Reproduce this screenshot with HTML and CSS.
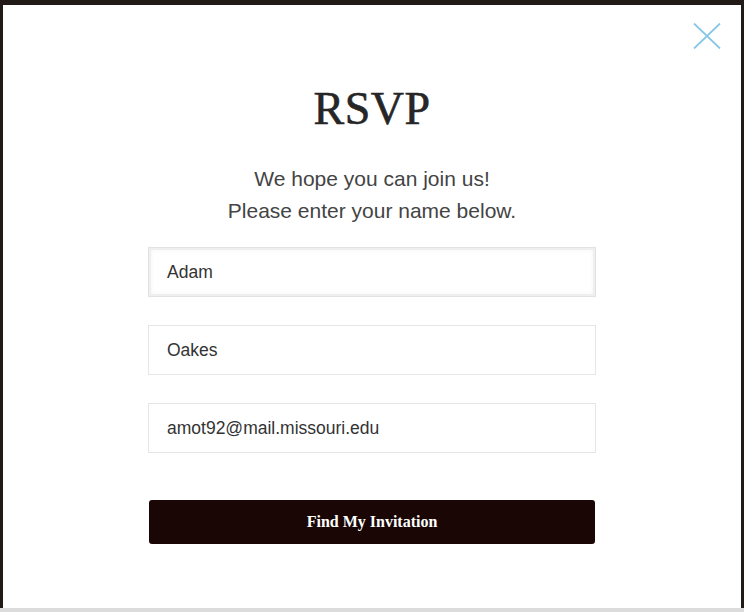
FILE: index.html
```html
<!DOCTYPE html>
<html lang="en">
<head>
<meta charset="utf-8">
<title>RSVP</title>
<link rel="stylesheet" href="styles.css">
</head>
<body>
<div class="stage">
  <div class="modal">
    <button class="close" aria-label="Close">
      <svg width="28" height="26" viewBox="0 0 28 26"><path d="M1 0.5 L27 25.5 M27 0.5 L1 25.5" stroke="#86c7e6" stroke-width="1.8" fill="none"/></svg>
    </button>
    <h1 class="title">RSVP</h1>
    <p class="intro">We hope you can join us!<br>Please enter your name below.</p>
    <form class="form">
      <div class="field field-focus">Adam</div>
      <div class="field">Oakes</div>
      <div class="field">amot92@mail.missouri.edu</div>
      <div class="btn">Find My Invitation</div>
    </form>
  </div>
  <div class="strip"></div>
</div>
</body>
</html>
```

FILE: styles.css
```css
html, body {
  margin: 0;
  padding: 0;
}
body {
  width: 744px;
  height: 612px;
  overflow: hidden;
  background: #221a17;
}
.stage {
  display: flex;
  flex-direction: column;
  height: 612px;
}
.modal {
  position: relative;
  margin: 5px 3px 0 3px;
  height: 603px;
  background: #ffffff;
  display: flex;
  flex-direction: column;
  align-items: center;
  box-sizing: border-box;
  padding-top: 81px;
}
.strip {
  flex: 1;
  background: #dcdcdc;
}
.close {
  position: absolute;
  top: 18px;
  right: 20px;
  width: 28px;
  height: 26px;
  padding: 0;
  border: 0;
  background: none;
  display: flex;
}
.title {
  margin: 0;
  font-family: "Liberation Serif", "Times New Roman", serif;
  font-weight: 400;
  font-size: 46px;
  line-height: 46px;
  color: #262626;
  letter-spacing: 0.5px;
  -webkit-text-stroke: 0.6px #262626;
}
.intro {
  margin: 31px 0 0 0;
  font-family: "Liberation Sans", Arial, sans-serif;
  font-size: 21px;
  line-height: 32px;
  color: #444444;
  text-align: center;
}
.form {
  margin-top: 20px;
  width: 448px;
  display: flex;
  flex-direction: column;
  gap: 28px;
}
.field {
  height: 50px;
  box-sizing: border-box;
  border: 1px solid #e6e6e6;
  padding-left: 18px;
  display: flex;
  align-items: center;
  font-family: "Liberation Sans", Arial, sans-serif;
  font-size: 17.5px;
  color: #333333;
}
.field-focus {
  border: 1px solid #e2e2e2;
  box-shadow: inset 0 0 0 2px #efefef, inset 0 0 4px 2px #f4f4f4;
}
.btn {
  margin: 19px 1px 0 1px;
  height: 44px;
  border-radius: 3px;
  background: #1a0604;
  color: #ffffff;
  font-family: "Liberation Serif", "Times New Roman", serif;
  font-weight: 700;
  font-size: 16px;
  display: flex;
  align-items: center;
  justify-content: center;
}
```
